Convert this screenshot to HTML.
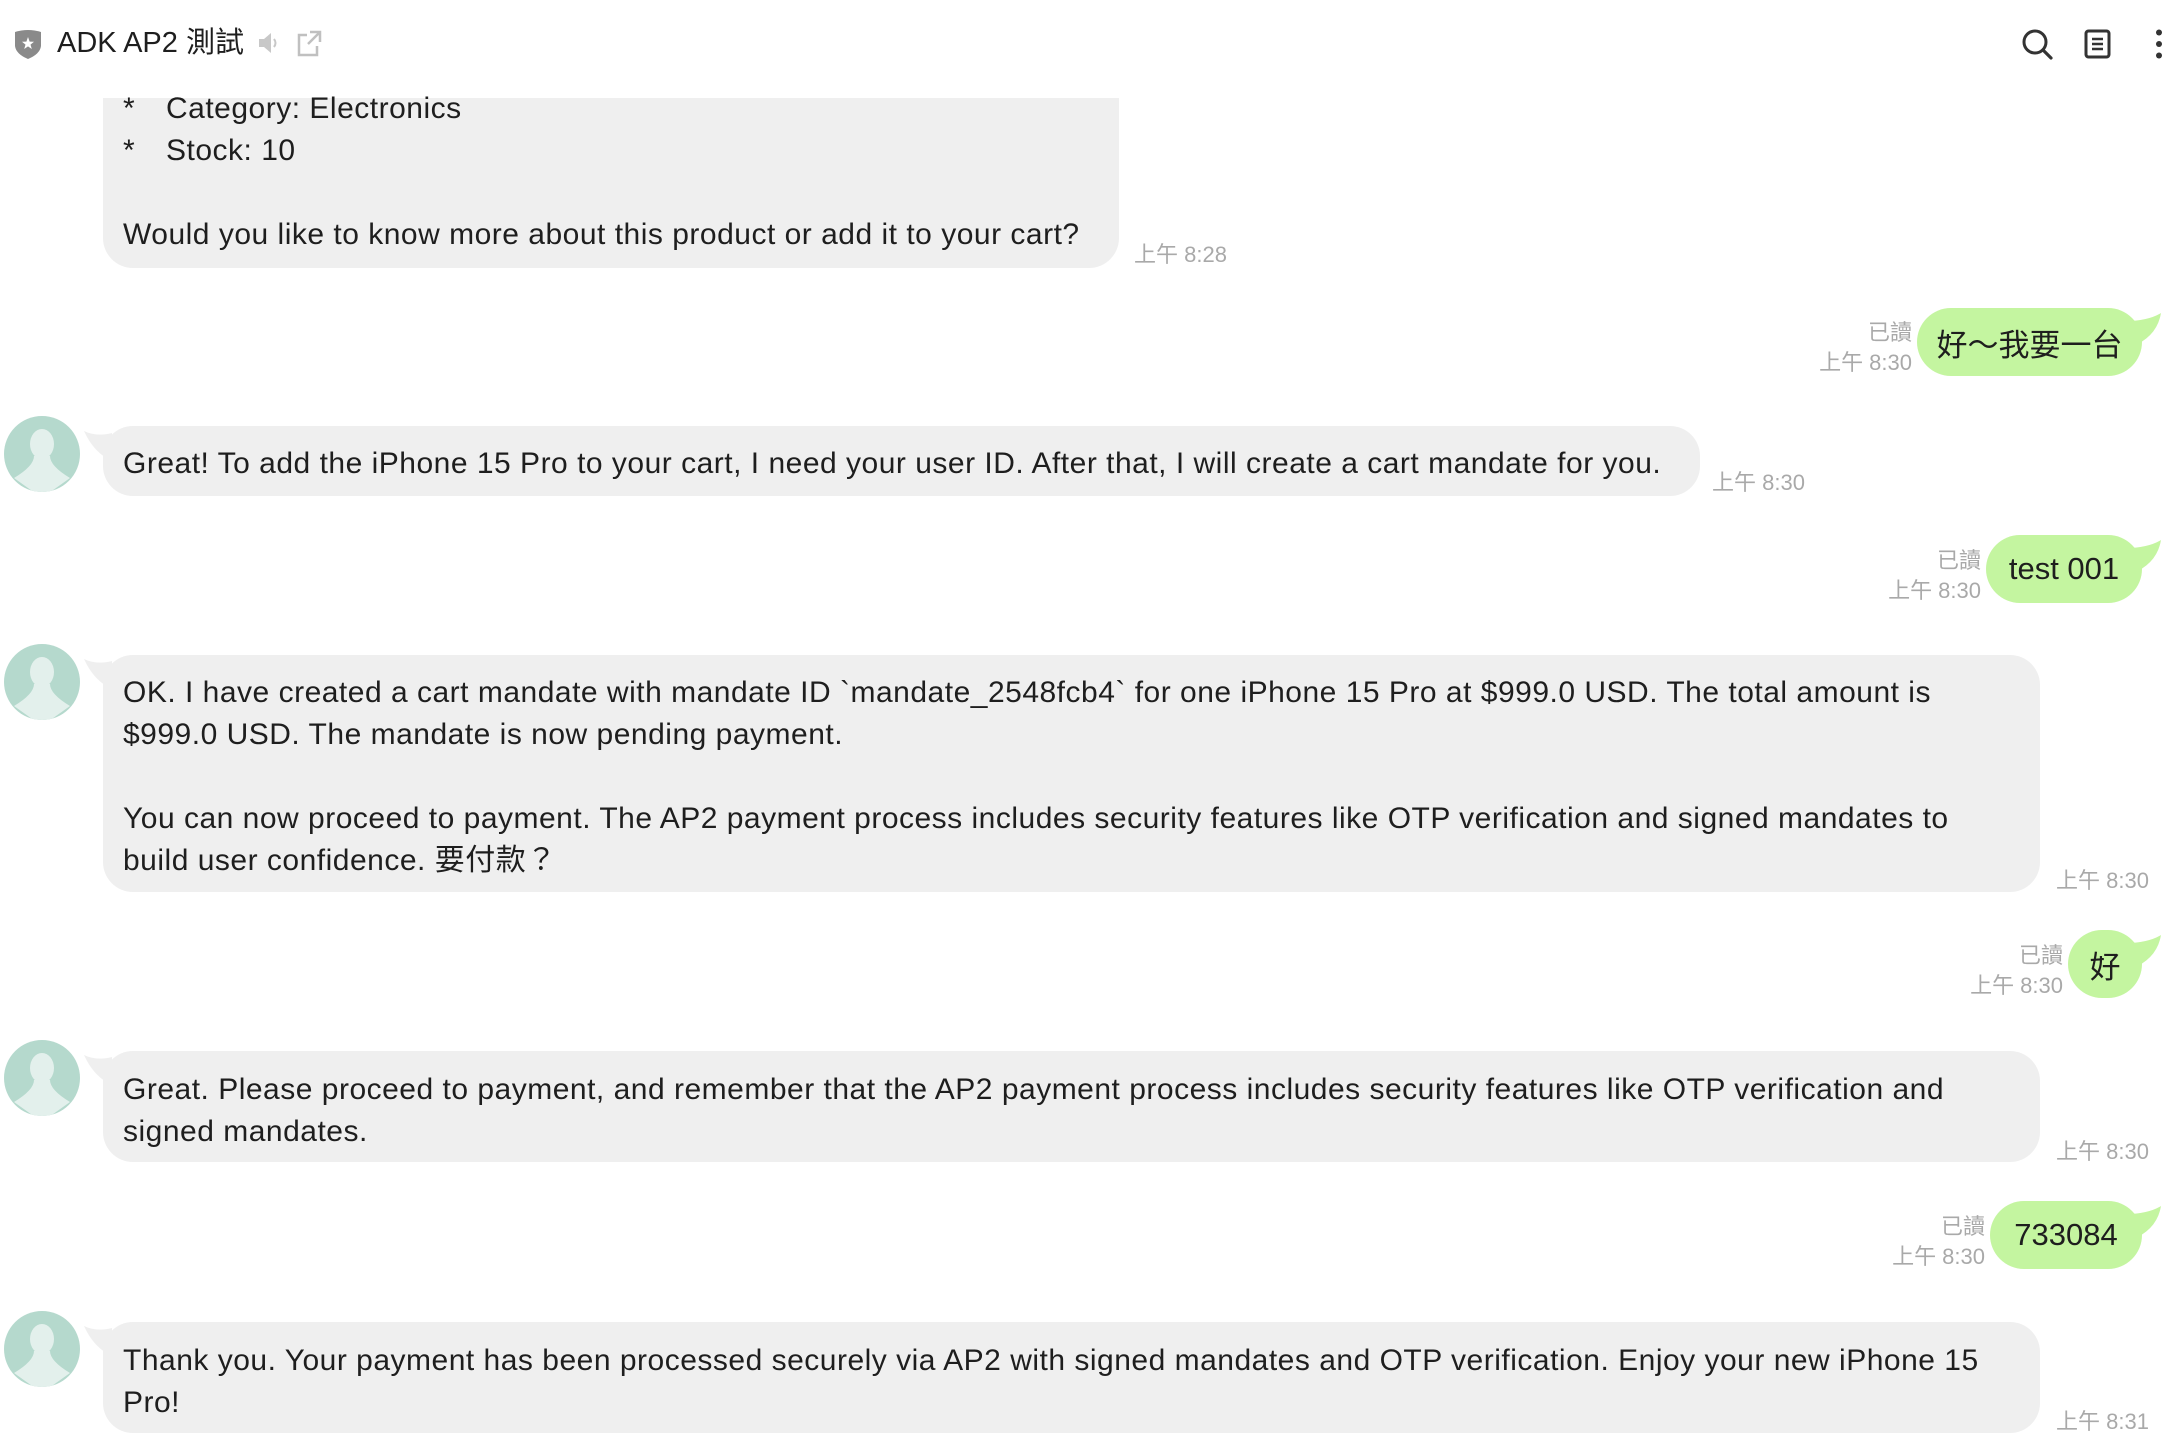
<!DOCTYPE html>
<html><head><meta charset="utf-8"><style>
*{margin:0;padding:0;box-sizing:border-box}
body{width:2180px;height:1454px;background:#fff;position:relative;overflow:hidden;font-family:"Liberation Sans","Noto Sans CJK TC",sans-serif;color:#1e1e1e}
.a{position:absolute}
.gb{position:absolute;background:#efefef;border-radius:30px}
.gr{position:absolute;background:#c4f5a0;border-radius:34px;display:flex;align-items:center;justify-content:center;font-size:31px;color:#1e1e1e}
.t{position:absolute;font-size:30px;letter-spacing:0.5px;line-height:42px;white-space:nowrap}
.ts{position:absolute;font-size:22px;color:#a9a9a9;white-space:nowrap;line-height:24px}
.rd{position:absolute;font-size:22px;color:#a9a9a9;text-align:right;line-height:30px;white-space:nowrap}
</style></head><body>

<!-- bubble 1 -->
<div class="gb" style="left:103px;top:60px;width:1016px;height:208px;border-top-left-radius:0;border-top-right-radius:0"></div>
<div class="a" style="left:0;top:0;width:1200px;height:98px;background:#fff"></div>
<div class="t" style="left:123px;top:88px">*</div><div class="t" style="left:166px;top:88px">Category: Electronics</div>
<div class="t" style="left:123px;top:130px">*</div><div class="t" style="left:166px;top:130px">Stock: 10</div>
<div class="t" style="left:123px;top:214px">Would you like to know more about this product or add it to your cart?</div>
<div class="ts" style="left:1134px;top:243px">上午 8:28</div>

<!-- header -->
<svg class="a" style="left:13px;top:28px" width="30" height="32" viewBox="0 0 30 32"><path d="M2 4 Q15 0 28 4 L28 18 Q27 26 15 31 Q3 26 2 18Z" fill="#8a8a8a"/><path d="M15 9 L16.6 13.6 L21 13.8 L17.5 16.6 L18.8 21 L15 18.4 L11.2 21 L12.5 16.6 L9 13.8 L13.4 13.6Z" fill="#fff"/></svg>
<div class="a" style="left:57px;top:25px;font-size:29px;line-height:36px;white-space:nowrap;color:#1e1e1e">ADK AP2 測試</div>
<svg class="a" style="left:257px;top:31px" width="24" height="24" viewBox="0 0 24 24"><path d="M2 8h5l7-6v20l-7-6H2z" fill="#c8c8c8"/><path d="M17 8q3 4 0 8" stroke="#c8c8c8" stroke-width="2" fill="none"/></svg>
<svg class="a" style="left:296px;top:30px" width="26" height="27" viewBox="0 0 26 27"><path d="M11 5H3v20h18v-9" stroke="#c0c0c0" stroke-width="2.5" fill="none"/><path d="M14 2h10v10M24 2L12 14" stroke="#c0c0c0" stroke-width="2.5" fill="none"/></svg>
<svg class="a" style="left:2021px;top:28px" width="40" height="34" viewBox="0 0 40 34"><circle cx="14" cy="14" r="11" stroke="#333" stroke-width="3" fill="none"/><path d="M22 22l8 8" stroke="#333" stroke-width="3.2" stroke-linecap="round"/></svg>
<svg class="a" style="left:2084px;top:29px" width="28" height="30" viewBox="0 0 28 30"><rect x="2" y="2" width="23" height="26" rx="2.5" stroke="#333" stroke-width="3" fill="none"/><path d="M8 10h11M8 15h11M8 20h11" stroke="#333" stroke-width="2.4"/></svg>
<svg class="a" style="left:2153px;top:29px" width="12" height="32" viewBox="0 0 12 32"><circle cx="6" cy="3.5" r="3" fill="#333"/><circle cx="6" cy="15" r="3" fill="#333"/><circle cx="6" cy="26.5" r="3" fill="#333"/></svg>

<!-- right 1 -->
<svg class="a" style="left:2101px;top:311px" width="62" height="40" viewBox="0 0 62 40"><path d="M0 8 Q40 14 60 2 Q56 26 30 36 Z" fill="#c4f5a0"/></svg>
<div class="gr" style="left:1917px;top:308px;width:225px;height:68px">好～我要一台</div>
<div class="rd" style="left:1700px;top:318px;width:212px">已讀<br>上午 8:30</div>

<svg width="0" height="0" style="position:absolute"><defs><clipPath id="c"><circle cx="38" cy="38" r="38"/></clipPath></defs></svg>

<!-- msg 2 -->
<svg class="a" style="left:4px;top:416px" width="76" height="76" viewBox="0 0 76 76"><circle cx="38" cy="38" r="38" fill="#b5d9cd"/><g clip-path="url(#c)" fill="#e3f0ec"><ellipse cx="38" cy="28" rx="12" ry="15"/><path d="M30 40 Q30 50 10 62 L38 82 L66 62 Q46 50 46 40Z"/></g></svg>
<svg class="a" style="left:84px;top:429px" width="30" height="34" viewBox="0 0 30 34"><path d="M0 2 Q12 8 28 4 L28 32 Q10 24 0 2Z" fill="#efefef"/></svg>
<div class="gb" style="left:103px;top:426px;width:1597px;height:70px"></div>
<div class="t" style="left:123px;top:443px">Great! To add the iPhone 15 Pro to your cart, I need your user ID. After that, I will create a cart mandate for you.</div>
<div class="ts" style="left:1712px;top:471px">上午 8:30</div>

<!-- right 2 -->
<svg class="a" style="left:2101px;top:538px" width="62" height="40" viewBox="0 0 62 40"><path d="M0 8 Q40 14 60 2 Q56 26 30 36 Z" fill="#c4f5a0"/></svg>
<div class="gr" style="left:1986px;top:535px;width:156px;height:68px">test 001</div>
<div class="rd" style="left:1760px;top:546px;width:221px">已讀<br>上午 8:30</div>

<!-- msg 3 -->
<svg class="a" style="left:4px;top:644px" width="76" height="76" viewBox="0 0 76 76"><circle cx="38" cy="38" r="38" fill="#b5d9cd"/><g clip-path="url(#c)" fill="#e3f0ec"><ellipse cx="38" cy="28" rx="12" ry="15"/><path d="M30 40 Q30 50 10 62 L38 82 L66 62 Q46 50 46 40Z"/></g></svg>
<svg class="a" style="left:84px;top:657px" width="30" height="34" viewBox="0 0 30 34"><path d="M0 2 Q12 8 28 4 L28 32 Q10 24 0 2Z" fill="#efefef"/></svg>
<div class="gb" style="left:103px;top:655px;width:1937px;height:237px"></div>
<div class="t" style="left:123px;top:672px">OK. I have created a cart mandate with mandate ID `mandate_2548fcb4` for one iPhone 15 Pro at $999.0 USD. The total amount is<br>$999.0 USD. The mandate is now pending payment.<br><br>You can now proceed to payment. The AP2 payment process includes security features like OTP verification and signed mandates to<br>build user confidence. 要付款？</div>
<div class="ts" style="left:2056px;top:869px">上午 8:30</div>

<!-- right 3 -->
<svg class="a" style="left:2101px;top:933px" width="62" height="40" viewBox="0 0 62 40"><path d="M0 8 Q40 14 60 2 Q56 26 30 36 Z" fill="#c4f5a0"/></svg>
<div class="gr" style="left:2068px;top:930px;width:74px;height:68px">好</div>
<div class="rd" style="left:1840px;top:941px;width:223px">已讀<br>上午 8:30</div>

<!-- msg 4 -->
<svg class="a" style="left:4px;top:1040px" width="76" height="76" viewBox="0 0 76 76"><circle cx="38" cy="38" r="38" fill="#b5d9cd"/><g clip-path="url(#c)" fill="#e3f0ec"><ellipse cx="38" cy="28" rx="12" ry="15"/><path d="M30 40 Q30 50 10 62 L38 82 L66 62 Q46 50 46 40Z"/></g></svg>
<svg class="a" style="left:84px;top:1053px" width="30" height="34" viewBox="0 0 30 34"><path d="M0 2 Q12 8 28 4 L28 32 Q10 24 0 2Z" fill="#efefef"/></svg>
<div class="gb" style="left:103px;top:1051px;width:1937px;height:111px"></div>
<div class="t" style="left:123px;top:1069px">Great. Please proceed to payment, and remember that the AP2 payment process includes security features like OTP verification and<br>signed mandates.</div>
<div class="ts" style="left:2056px;top:1140px">上午 8:30</div>

<!-- right 4 -->
<svg class="a" style="left:2101px;top:1204px" width="62" height="40" viewBox="0 0 62 40"><path d="M0 8 Q40 14 60 2 Q56 26 30 36 Z" fill="#c4f5a0"/></svg>
<div class="gr" style="left:1990px;top:1201px;width:152px;height:68px">733084</div>
<div class="rd" style="left:1760px;top:1212px;width:225px">已讀<br>上午 8:30</div>

<!-- msg 5 -->
<svg class="a" style="left:4px;top:1311px" width="76" height="76" viewBox="0 0 76 76"><circle cx="38" cy="38" r="38" fill="#b5d9cd"/><g clip-path="url(#c)" fill="#e3f0ec"><ellipse cx="38" cy="28" rx="12" ry="15"/><path d="M30 40 Q30 50 10 62 L38 82 L66 62 Q46 50 46 40Z"/></g></svg>
<svg class="a" style="left:84px;top:1324px" width="30" height="34" viewBox="0 0 30 34"><path d="M0 2 Q12 8 28 4 L28 32 Q10 24 0 2Z" fill="#efefef"/></svg>
<div class="gb" style="left:103px;top:1322px;width:1937px;height:111px"></div>
<div class="t" style="left:123px;top:1340px">Thank you. Your payment has been processed securely via AP2 with signed mandates and OTP verification. Enjoy your new iPhone 15<br>Pro!</div>
<div class="ts" style="left:2056px;top:1410px">上午 8:31</div>

</body></html>
